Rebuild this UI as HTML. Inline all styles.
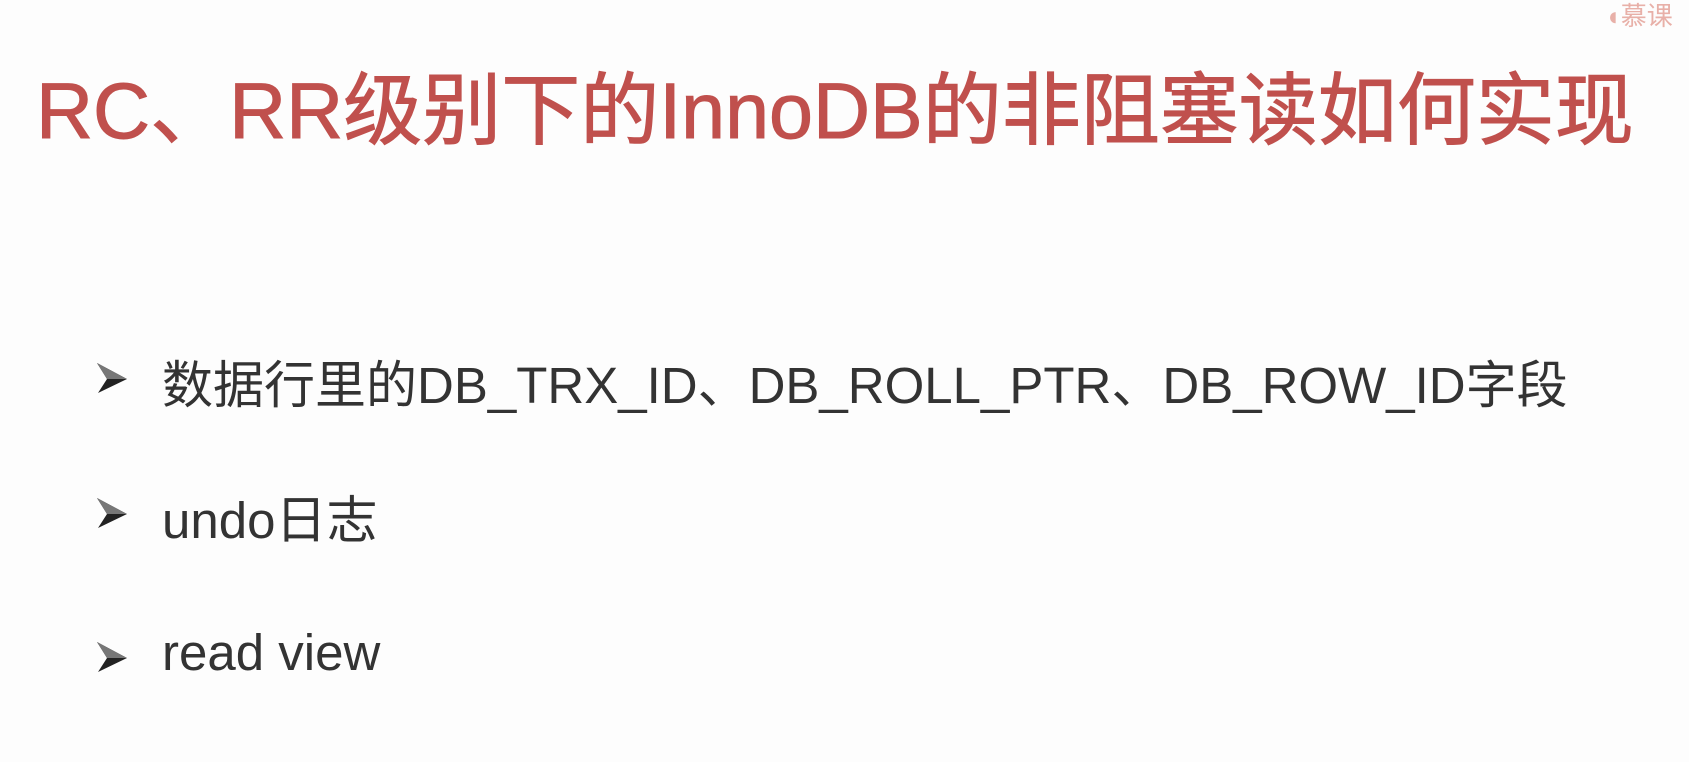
<!DOCTYPE html>
<html><head><meta charset="utf-8"><style>
html,body{margin:0;padding:0;}
body{width:1689px;height:762px;background:#fdfdfd;position:relative;overflow:hidden;font-family:"Liberation Sans","Noto Sans CJK SC",sans-serif;}
.t{position:absolute;left:36px;top:46px;font-size:79px;color:#c0504d;white-space:nowrap;letter-spacing:0;-webkit-text-stroke:1px #c0504d;}
.b{position:absolute;left:95px;font-size:51px;color:#333;white-space:nowrap;}
.b svg{position:absolute;left:0;top:17px;}
.b span.x{padding-left:67px;}
.wm{position:absolute;left:1605px;top:-4px;font-size:26px;color:#e8b0a8;}
</style></head><body>
<div class="wm">◖慕课</div>
<div class="t">RC、RR级别下的InnoDB的非阻塞读如何实现</div>
<div class="b" style="top:344px"><svg width="34" height="34" viewBox="0 0 34 34"><polygon points="2,2 32,18 3,32 12,18" fill="#222"/><polygon points="2,2 12,18 32,18" fill="#777"/></svg><span class="x">数据行里的DB_TRX_ID、DB_ROLL_PTR、DB_ROW_ID字段</span></div>
<div class="b" style="top:479px"><svg width="34" height="34" viewBox="0 0 34 34"><polygon points="2,2 32,18 3,32 12,18" fill="#222"/><polygon points="2,2 12,18 32,18" fill="#777"/></svg><span class="x">undo日志</span></div>
<div class="b" style="top:623px"><svg width="34" height="34" viewBox="0 0 34 34"><polygon points="2,2 32,18 3,32 12,18" fill="#222"/><polygon points="2,2 12,18 32,18" fill="#777"/></svg><span class="x">read view</span></div>
</body></html>
